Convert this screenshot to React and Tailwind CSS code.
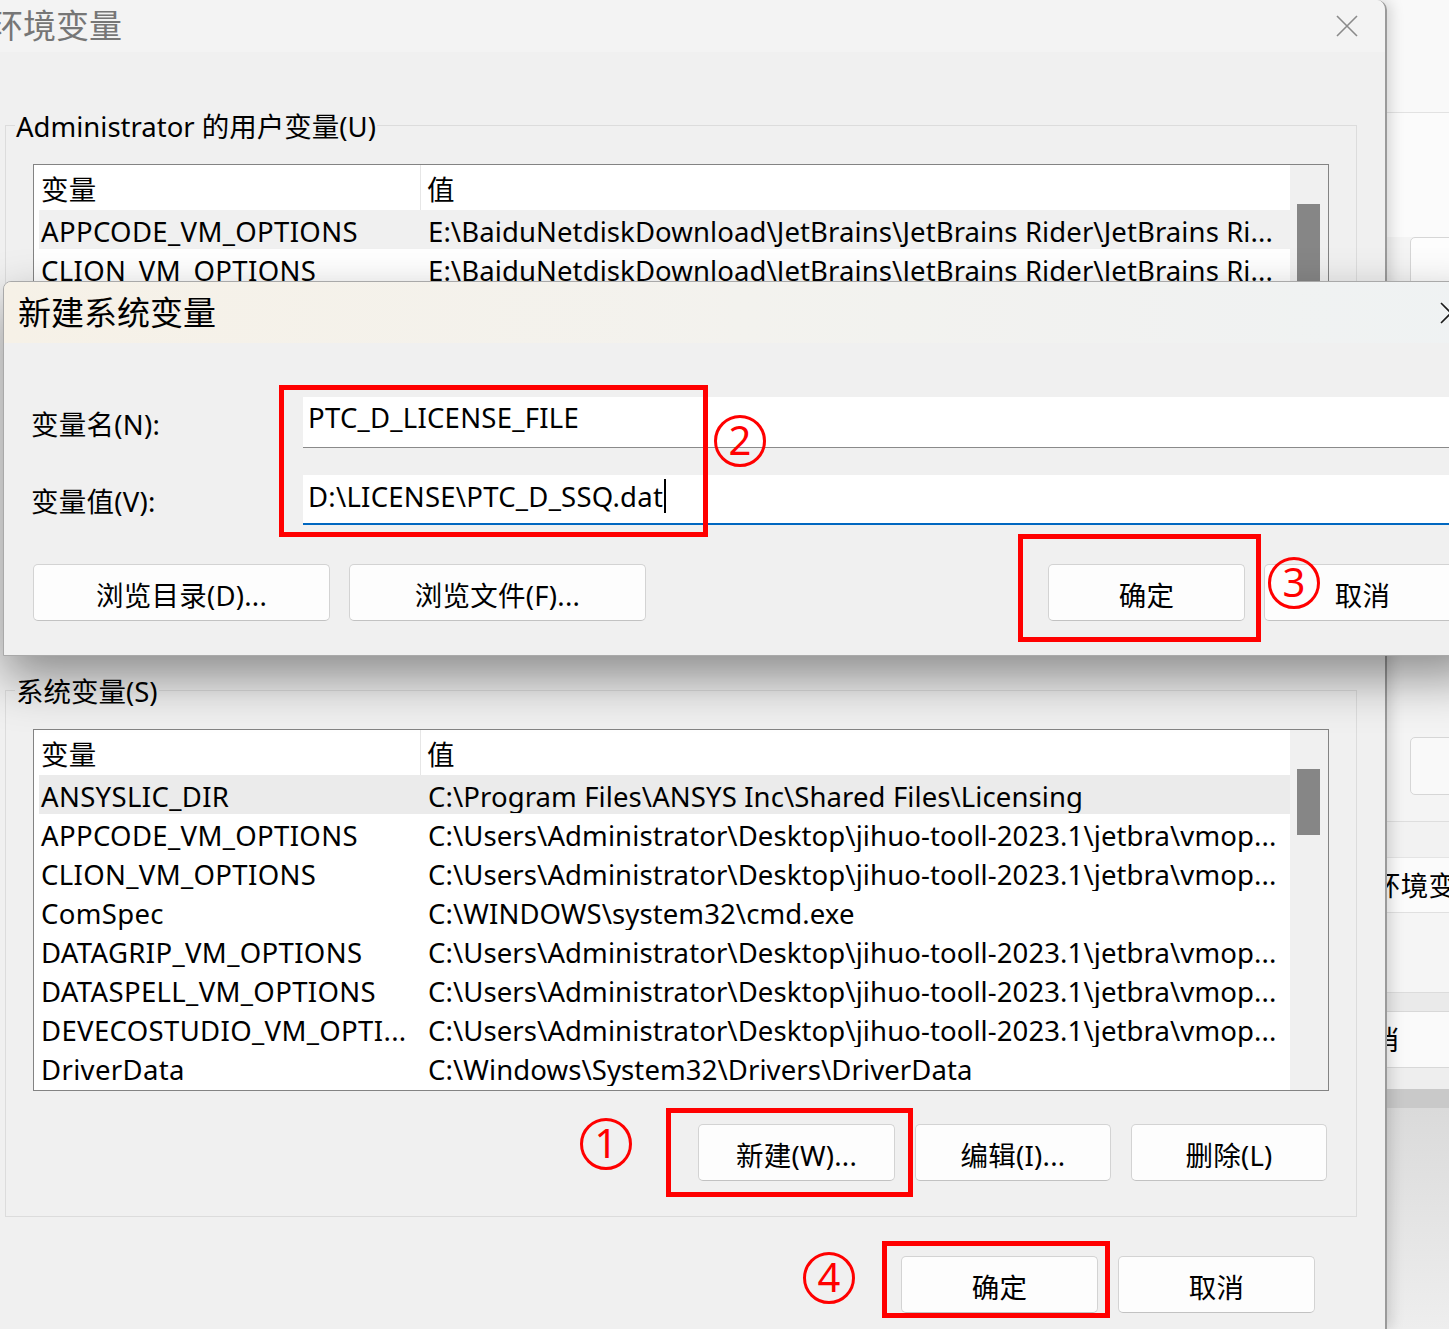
import React from 'react';

const vmop = 'C:\\Users\\Administrator\\Desktop\\jihuo-tooll-2023.1\\jetbra\\vmop...';
const rider = 'E:\\BaiduNetdiskDownload\\JetBrains\\JetBrains Rider\\JetBrains Ri...';

const userRows = [
  ['APPCODE_VM_OPTIONS', rider],
  ['CLION_VM_OPTIONS', rider],
  ['DATAGRIP_VM_OPTIONS', rider],
  ['DATASPELL_VM_OPTIONS', rider],
  ['GOLAND_VM_OPTIONS', rider],
  ['IDEA_VM_OPTIONS', rider],
  ['JETBRAINSCLIENT_VM_OPTIONS', rider],
  ['OneDrive', 'C:\\Users\\Administrator\\OneDrive'],
];

const sysRows = [
  ['ANSYSLIC_DIR', 'C:\\Program Files\\ANSYS Inc\\Shared Files\\Licensing'],
  ['APPCODE_VM_OPTIONS', vmop],
  ['CLION_VM_OPTIONS', vmop],
  ['ComSpec', 'C:\\WINDOWS\\system32\\cmd.exe'],
  ['DATAGRIP_VM_OPTIONS', vmop],
  ['DATASPELL_VM_OPTIONS', vmop],
  ['DEVECOSTUDIO_VM_OPTI...', vmop],
  ['DriverData', 'C:\\Windows\\System32\\Drivers\\DriverData'],
];

function CloseIcon({ className }) {
  return (
    <svg viewBox="0 0 22 22" className={className} fill="none" stroke="currentColor" strokeWidth="1.6">
      <path d="M1 1 L21 21 M21 1 L1 21" />
    </svg>
  );
}

function VarList({ rows, selBg, thumbH }) {
  return (
    <div className="flex h-[362px] w-[1296px] border border-[#838383] bg-white">
      <div className="flex-1 min-w-0 pl-[5px]">
        <div className="flex h-[45px] items-center">
          <div className="flex h-full w-[382px] items-center border-r border-[#e6e6e6] pl-[2px] pt-[3px]">变量</div>
          <div className="pl-[6px] pt-[3px]">值</div>
        </div>
        {rows.map(([k, v], i) => (
          <div key={i} className={`flex h-[39px] items-center pt-[3px] ${i === 0 ? selBg : ''}`}>
            <div className="w-[382px] overflow-hidden whitespace-nowrap pl-[2px] tracking-[0.35px]">{k}</div>
            <div className="flex-1 overflow-hidden whitespace-nowrap pl-[7px] tracking-[0.1px]">{v}</div>
          </div>
        ))}
      </div>
      <div className="w-[38px] bg-[#f0f0f0] pl-[7px] pt-[39px]">
        <div className={`w-[23px] bg-[#868686] ${thumbH}`} />
      </div>
    </div>
  );
}

function Btn({ children, className = '' }) {
  return (
    <div className={`flex h-[57px] items-center justify-center rounded-[5px] border border-[#d3d3d3] border-b-[#c2c2c2] bg-[#fdfdfd] pt-[5px] ${className}`}>
      {children}
    </div>
  );
}

function Num({ n, className }) {
  return (
    <div className={`absolute flex h-[52px] w-[52px] items-center justify-center rounded-full border-[3px] border-[#ff0000] pb-[2px] text-[40px] leading-none text-[#ff0000] ${className}`}>
      {n}
    </div>
  );
}

export default function App() {
  return (
    <div className="relative h-[1329px] w-[1449px] overflow-hidden bg-[#ececec] font-['Noto_Sans','Noto_Sans_CJK_SC',sans-serif] text-[27.5px] leading-[1.2] tracking-[0.25px] text-black">
      {/* window behind, right side */}
      <div className="absolute left-[1300px] top-0 flex h-[1329px] w-[200px] flex-col bg-[#f4f4f4]">
        <div className="h-[113px] shrink-0 border-b border-[#e2e2e2] bg-[#f9f9f9]" />
        <div className="h-[124px] shrink-0 bg-[#fbfbfb]" />
        <div className="ml-[110px] h-[58px] shrink-0 rounded-[5px] border border-[#d6d6d6] bg-[#fdfdfd]" />
        <div className="h-[442px] shrink-0" />
        <div className="ml-[110px] h-[58px] shrink-0 rounded-[5px] border border-[#d6d6d6] bg-[#f9f9f9]" />
        <div className="h-[27px] shrink-0 border-b border-[#dedede]" />
        <div className="h-[36px] shrink-0 border-b border-[#e4e4e4] bg-[#f2f2f2]" />
        <div className="flex h-[55px] shrink-0 items-center whitespace-nowrap border-b border-[#e0e0e0] bg-[#fbfbfb] pl-[73px]">环境变量</div>
        <div className="h-[80px] shrink-0 border-b border-[#dcdcdc] bg-[#f5f5f5]" />
        <div className="h-[18px] shrink-0 bg-[#eaeaea]" />
        <div className="flex h-[57px] shrink-0 items-center whitespace-nowrap border-y border-[#d8d8d8] bg-[#fafafa] pl-[44px]">取消</div>
        <div className="h-[21px] shrink-0 bg-[#eeeeee]" />
        <div className="h-[19px] shrink-0 bg-[#c9c9c9]" />
        <div className="flex-1 bg-gradient-to-b from-[#dadada] to-[#eeeeee]" />
      </div>

      {/* main window */}
      <div className="absolute left-0 top-0 flex h-[1329px] w-[1387px] flex-col overflow-hidden rounded-tr-[10px] border-r-2 border-[#9a9a9a] bg-[#f0f0f0] shadow-[4px_0_14px_rgba(0,0,0,0.15)]">
        <div className="flex h-[52px] shrink-0 items-center justify-between bg-[#f3f3f3] pr-[27px]">
          <span className="ml-[-10px] text-[33px] tracking-normal text-[#767676]">环境变量</span>
          <CloseIcon className="h-[22px] w-[22px] text-[#8a8a8a]" />
        </div>

        <div className="pt-[55px]">
          <fieldset className="ml-[5px] w-[1352px] border border-[#dcdcdc]">
            <legend className="ml-[9px] px-[1px] pt-[3px] leading-[33px] tracking-normal">Administrator 的用户变量(U)</legend>
            <div className="pb-[36px] pl-[27px] pt-[21px]">
              <VarList rows={userRows} selBg="bg-[#f0f0f0]" thumbH="h-[140px]" />
              <div className="mt-[33px] flex w-[1294px] justify-end gap-[20px]">
                <Btn className="w-[197px]">新建(N)...</Btn>
                <Btn className="w-[196px]">编辑(E)...</Btn>
                <Btn className="w-[196px]">删除(D)</Btn>
              </div>
            </div>
          </fieldset>

          <fieldset className="ml-[5px] mt-[19px] w-[1352px] border border-[#dcdcdc]">
            <legend className="ml-[9px] px-[1px] pt-[3px] leading-[33px] tracking-normal">系统变量(S)</legend>
            <div className="pb-[35px] pl-[27px] pt-[21px]">
              <VarList rows={sysRows} selBg="bg-[#ebebeb]" thumbH="h-[66px]" />
              <div className="mt-[33px] flex w-[1294px] justify-end gap-[20px]">
                <Btn className="w-[197px]">新建(W)...</Btn>
                <Btn className="w-[196px]">编辑(I)...</Btn>
                <Btn className="w-[196px]">删除(L)</Btn>
              </div>
            </div>
          </fieldset>

          <div className="mt-[39px] flex w-[1357px] justify-end gap-[20px] pr-[42px]">
            <Btn className="w-[197px]">确定</Btn>
            <Btn className="w-[197px]">取消</Btn>
          </div>
        </div>
      </div>

      {/* new system variable dialog */}
      <div className="absolute left-[3px] top-[281px] flex h-[375px] w-[1480px] flex-col overflow-hidden rounded-tl-[8px] border border-[#a9a9a9] bg-[#f0f0f0] shadow-[0_22px_50px_rgba(0,0,0,0.42)]">
        <div className="flex h-[61px] shrink-0 items-center justify-between bg-gradient-to-r from-[#f6f1e7] via-[#f3f2ee] to-[#eff2f3] pl-[14px] pr-[20px]">
          <span className="text-[33px] tracking-normal">新建系统变量</span>
          <CloseIcon className="h-[22px] w-[22px] text-[#1a1a1a]" />
        </div>
        <div className="flex flex-col pt-[54px]">
          <div className="flex h-[51px] items-center">
            <div className="w-[299px] pl-[27px] pt-[3px]">变量名(N):</div>
            <div className="flex h-full flex-1 items-center border-b border-[#8a8a8a] bg-white pb-[9px] pl-[5px]">PTC_D_LICENSE_FILE</div>
          </div>
          <div className="mt-[27px] flex h-[50px] items-center">
            <div className="w-[299px] pl-[27px] pt-[3px]">变量值(V):</div>
            <div className="flex h-full flex-1 items-center border-b-2 border-[#0067c0] bg-white pb-[6px] pl-[5px]">
              D:\LICENSE\PTC_D_SSQ.dat
              <span className="ml-[1px] inline-block h-[34px] w-[1.5px] bg-black" />
            </div>
          </div>
          <div className="mt-[39px] flex pl-[29px] pr-[21px]">
            <Btn className="w-[297px]">浏览目录(D)...</Btn>
            <Btn className="ml-[19px] w-[297px]">浏览文件(F)...</Btn>
            <Btn className="ml-auto w-[197px] border-[#0067c0] border-b-[#0067c0]">确定</Btn>
            <Btn className="ml-[19px] w-[197px]">取消</Btn>
          </div>
        </div>
      </div>

      {/* red annotations */}
      <div className="absolute left-[279px] top-[385px] h-[152px] w-[429px] border-[5px] border-[#ff0000]" />
      <div className="absolute left-[1018px] top-[534px] h-[108px] w-[243px] border-[5px] border-[#ff0000]" />
      <div className="absolute left-[666px] top-[1108px] h-[89px] w-[247px] border-[5px] border-[#ff0000]" />
      <div className="absolute left-[882px] top-[1241px] h-[77px] w-[228px] border-[5px] border-[#ff0000]" />
      <Num n="1" className="left-[580px] top-[1118px]" />
      <Num n="2" className="left-[714px] top-[415px]" />
      <Num n="3" className="left-[1268px] top-[557px]" />
      <Num n="4" className="left-[803px] top-[1252px]" />
    </div>
  );
}
